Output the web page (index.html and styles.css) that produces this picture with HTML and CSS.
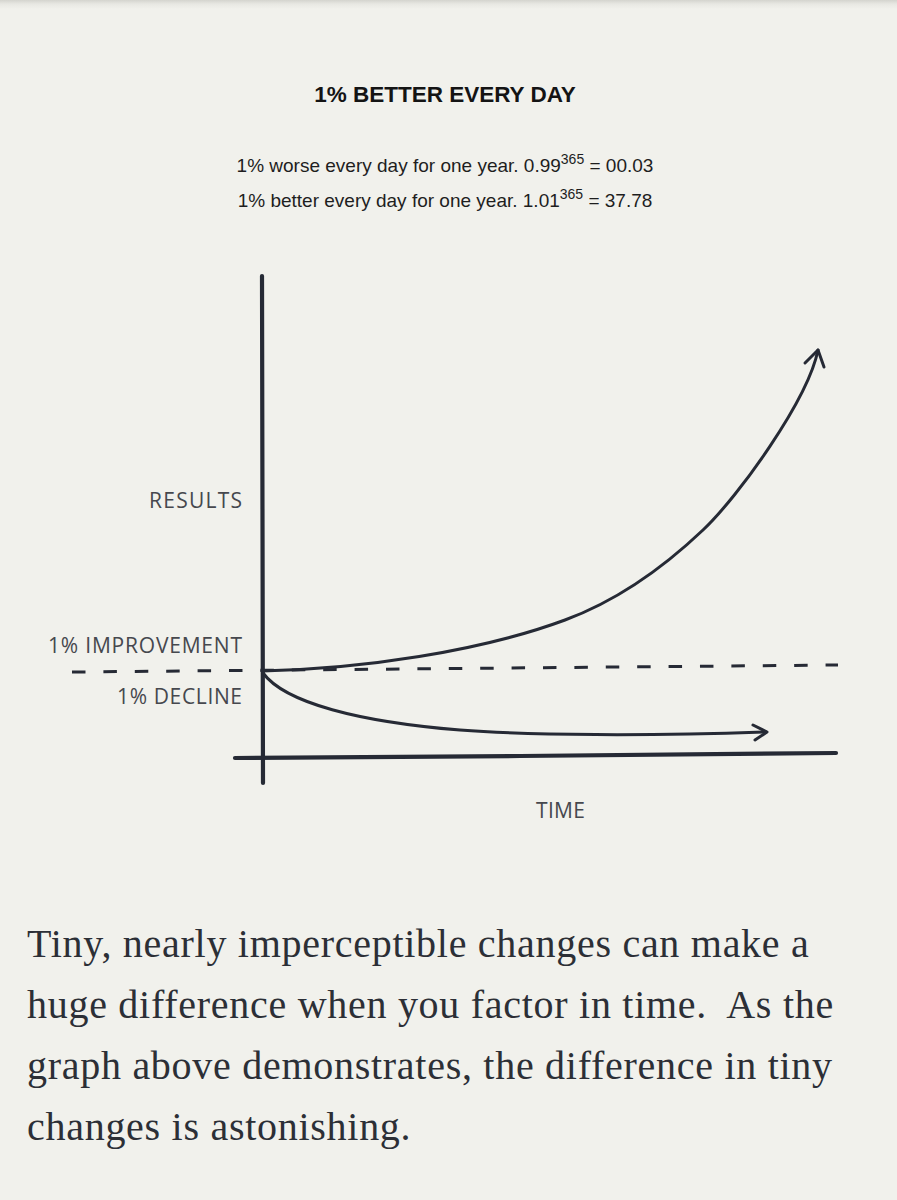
FILE: index.html
```html
<!DOCTYPE html>
<html lang="en">
<head>
<meta charset="utf-8">
<title>1% Better Every Day</title>
<link rel="stylesheet" href="styles.css">
</head>
<body>
<div class="page">
  <h1 class="title">1% BETTER EVERY DAY</h1>
  <div class="formulas">
    <p>1% worse every day for one year. 0.99<span class="sup">365</span> = 00.03</p>
    <p>1% better every day for one year. 1.01<span class="sup">365</span> = 37.78</p>
  </div>
  <svg class="chart" viewBox="0 0 897 640" xmlns="http://www.w3.org/2000/svg">
    <g transform="translate(0,-230)">
      <line class="dash" x1="72" y1="672" x2="838" y2="665"/>
      <path class="axis" d="M262 276 L262.5 520 L263 783"/>
      <path class="axis" d="M235 758 L520 756 L836 753"/>
      <path class="curve" d="M262 671 C362 669 480 651.5 565 620 C611 603 657 573.7 703 530 C738 497 808 400 818 350"/>
      <path class="curve" d="M805 363 L818 350 L824 367"/>
      <path class="curve" d="M263 673 C285 703 360 722 460 730 C530 735.6 650 736 766 732"/>
      <path class="curve" d="M753 725 L767 732 L755 740"/>
      <text class="lbl" x="149" y="508" textLength="93" lengthAdjust="spacing">RESULTS</text>
      <text class="lbl" x="48" y="653" textLength="194" lengthAdjust="spacing">1% IMPROVEMENT</text>
      <text class="lbl" x="117" y="704" textLength="125" lengthAdjust="spacing">1% DECLINE</text>
      <text class="lbl" x="536" y="818" textLength="49" lengthAdjust="spacing">TIME</text>
    </g>
  </svg>
  <p class="body-text">
    <span class="line">Tiny, nearly imperceptible changes can make a</span>
    <span class="line">huge difference when you factor in time.&nbsp; As the</span>
    <span class="line">graph above demonstrates, the difference in tiny</span>
    <span class="line">changes is astonishing.</span>
  </p>
</div>
</body>
</html>
```
FILE: styles.css
```css
html, body {
  margin: 0;
  padding: 0;
  background: #f1f1ec;
}

.page {
  width: 897px;
  height: 1200px;
  overflow: hidden;
  background:
    linear-gradient(to bottom, rgba(60, 60, 50, 0.16) 0, rgba(60, 60, 50, 0.05) 4px, rgba(60, 60, 50, 0) 9px),
    #f1f1ec;
}

.title {
  margin: 82px 0 0;
  padding-right: 7px;
  font-family: "Liberation Sans", Arial, sans-serif;
  font-weight: bold;
  font-size: 22.5px;
  line-height: 26px;
  text-align: center;
  color: #141414;
}

.formulas {
  margin-top: 40px;
  padding-right: 7px;
  font-family: "Liberation Sans", Arial, sans-serif;
  font-size: 19px;
  line-height: 35px;
  text-align: center;
  color: #1e1e1e;
}

.formulas p {
  margin: 0;
}

.sup {
  font-size: 14px;
  line-height: 0;
  vertical-align: 8px;
}

.chart {
  display: block;
  width: 897px;
  height: 640px;
  margin-top: 12px;
}

.axis {
  fill: none;
  stroke: #262a35;
  stroke-width: 4.2;
  stroke-linecap: round;
  stroke-linejoin: round;
}

.curve {
  fill: none;
  stroke: #262a35;
  stroke-width: 3;
  stroke-linecap: round;
  stroke-linejoin: round;
}

.dash {
  stroke: #262a35;
  stroke-width: 3;
  stroke-dasharray: 13.5 17.9;
}

.lbl {
  font-family: "Open Sans", "DejaVu Sans", sans-serif;
  font-size: 21px;
  fill: #46484e;
}

.body-text {
  margin: 43px 0 0;
  padding-left: 27px;
  font-family: "Liberation Serif", "Times New Roman", serif;
  font-size: 40px;
  line-height: 61px;
  letter-spacing: 0.72px;
  color: #2c2f36;
}

.line {
  display: block;
  white-space: nowrap;
}
```
